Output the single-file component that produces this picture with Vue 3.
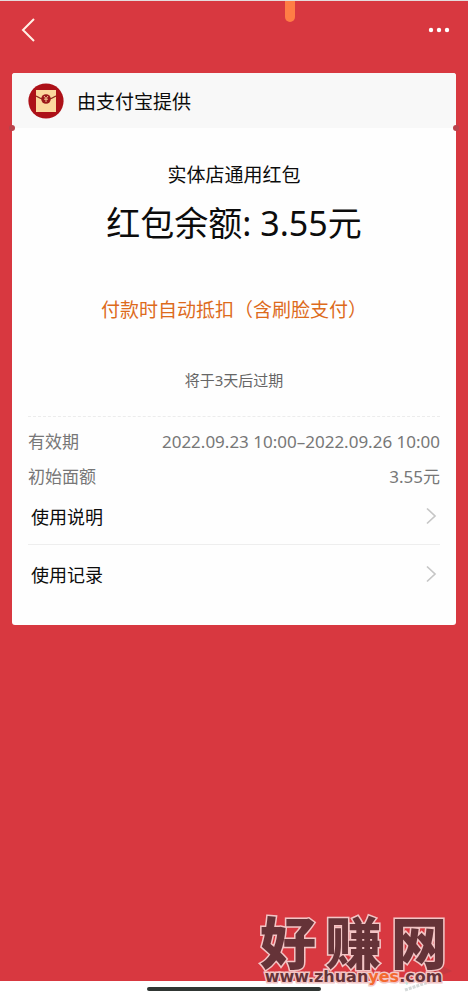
<script setup>
const details = [
  { label: '有效期', value: '2022.09.23 10:00–2022.09.26 10:00' },
  { label: '初始面额', value: '3.55元' },
]
const links = ['使用说明', '使用记录']
</script>

<template>
  <div class="page">
    <main class="screen">
      <i class="pill"></i>
      <nav class="nav">
        <button class="icon-btn" aria-label="返回">
          <svg width="16" height="26" viewBox="0 0 16 26"><path d="M14 2 3 13l11 11" fill="none" stroke="#fff0e6" stroke-width="2" /></svg>
        </button>
        <button class="icon-btn" aria-label="更多">
          <svg width="22" height="6" viewBox="0 0 22 6" fill="#fff"><circle cx="3" cy="3" r="2.2" /><circle cx="11" cy="3" r="2.2" /><circle cx="19" cy="3" r="2.2" /></svg>
        </button>
      </nav>

      <section class="card">
        <header class="provider">
          <svg width="36" height="36" viewBox="0 0 36 36">
            <circle cx="18" cy="18" r="17.6" fill="#ad1118" />
            <path d="M8 7h20v22H8z" fill="#fbd79d" />
            <path d="M8 13q10 7 20 0" fill="none" stroke="#8c2a1c" stroke-width="1.2" />
            <circle cx="18" cy="16" r="4.8" fill="#9b171a" />
            <path d="m16 13 2 2.500 2-2.500M18 15.500v3.500M16 16.200h4" fill="none" stroke="#fbd79d" stroke-width=".9" />
          </svg>
          <span>由支付宝提供</span>
        </header>
        <div class="body">
          <h1>实体店通用红包</h1>
          <p class="balance">红包余额: 3.55元</p>
          <p class="notice">付款时自动抵扣（含刷脸支付）</p>
          <p class="expiry">将于3天后过期</p>
          <dl class="details">
            <div v-for="d in details" :key="d.label">
              <dt>{{ d.label }}</dt>
              <dd>{{ d.value }}</dd>
            </div>
          </dl>
          <ul class="links">
            <li v-for="l in links" :key="l">
              <a href="#">
                <span>{{ l }}</span>
                <svg width="12" height="18" viewBox="0 0 12 18"><path d="m2 1.500 8 7.500-8 7.500" fill="none" stroke="#c6c6c6" stroke-width="1.700" /></svg>
              </a>
            </li>
          </ul>
        </div>
      </section>
    </main>
    <footer class="home"><i></i></footer>
    <svg class="smudge" width="60" height="34" viewBox="0 0 60 34">
      <path d="M14 14 42 3l10 5-30 12z" fill="#8a3a44" opacity=".25" />
      <path d="m3 19 8-2-4 5z" fill="#bfe6e2" />
      <path d="m5 27 27-9" fill="none" stroke="#d5dada" stroke-width="3" stroke-dasharray="3 1" />
    </svg>
    <div class="brand">
      <div class="brand-name"><span>好</span><span>赚</span><span>网</span></div>
      <div class="brand-url">www.zhuan<b>yes</b>.com</div>
    </div>
  </div>
</template>

<style>
body { margin: 0; }
</style>

<style scoped>
.page {
  position: relative;
  min-height: 100vh;
  display: flex;
  flex-direction: column;
  background: #fff;
  color: #0c0c0c;
  font-family: "Noto Sans", "Noto Sans CJK SC", sans-serif;
}
.screen {
  flex: 1;
  position: relative;
  display: flex;
  flex-direction: column;
  overflow: hidden;
  background: #d83840;
  border-top: 1px solid #e4dcdc;
}
.pill {
  position: absolute;
  top: -8px;
  left: 61%;
  width: 10px;
  height: 29px;
  border-radius: 5px;
  background: #ff7d45;
}
.nav {
  height: 58px;
  padding: 0 18px 0 20px;
  display: flex;
  align-items: center;
  justify-content: space-between;
}
.icon-btn {
  padding: 0;
  border: 0;
  background: none;
  display: flex;
}
.card {
  position: relative;
  margin: 14px 12px 0;
  border-radius: 3px;
  background: #fefefe;
}
.card::before,
.card::after {
  content: "";
  position: absolute;
  top: 52px;
  width: 6px;
  height: 6px;
  border-radius: 50%;
  background: #b8434b;
}
.card::before { left: -3px; }
.card::after { right: -3px; }
.provider {
  height: 55px;
  padding: 1px 16px 0;
  box-sizing: border-box;
  display: flex;
  align-items: center;
  gap: 13px;
  border-radius: 3px 3px 0 0;
  background: #f8f8f8;
  font-size: 19px;
}
.body { padding: 33px 16px 22px; }
h1, p, dl, dd, ul { margin: 0; }
h1, p { text-align: center; }
h1 {
  font-size: 19px;
  line-height: 28px;
  font-weight: 400;
}
.balance {
  margin-top: 10px;
  font-size: 34px;
  line-height: 48px;
}
.notice {
  margin-top: 49px;
  font-size: 19px;
  line-height: 28px;
  color: #dd6b1c;
}
.expiry {
  margin-top: 44px;
  font-size: 15px;
  line-height: 24px;
  color: #666;
}
.details {
  margin-top: 24px;
  padding-top: 7px;
  border-top: 1px dashed #ececec;
  font-size: 17px;
  line-height: 35px;
  color: #777;
}
.details div {
  display: flex;
  justify-content: space-between;
}
.links {
  padding: 0;
  list-style: none;
}
.links li:first-child { padding-bottom: 6px; }
.links li + li {
  padding: 7px 0;
  border-top: 1px solid #eee;
}
.links a {
  height: 44px;
  padding: 0 3px;
  display: flex;
  align-items: center;
  justify-content: space-between;
  color: inherit;
  font-size: 18px;
  text-decoration: none;
}
.smudge {
  position: absolute;
  right: 8px;
  bottom: 3px;
}
.brand {
  position: absolute;
  right: 21px;
  bottom: 14px;
  width: 187px;
  color: #653338;
  -webkit-text-stroke: 3px #f3c5c5;
  paint-order: stroke fill;
}
.brand-name {
  display: flex;
  justify-content: space-between;
  font: 900 56px/56px "Noto Sans CJK SC", sans-serif;
}
.brand-url {
  font: bold 16px/18px "DejaVu Sans", sans-serif;
  text-align: center;
  white-space: nowrap;
}
.brand-url b { color: #f4692f; }
.home {
  height: 19px;
  display: flex;
  align-items: center;
  justify-content: center;
}
.home i {
  width: 37%;
  height: 4px;
  margin-bottom: 3px;
  border-radius: 2px;
  background: #303633;
}
</style>
